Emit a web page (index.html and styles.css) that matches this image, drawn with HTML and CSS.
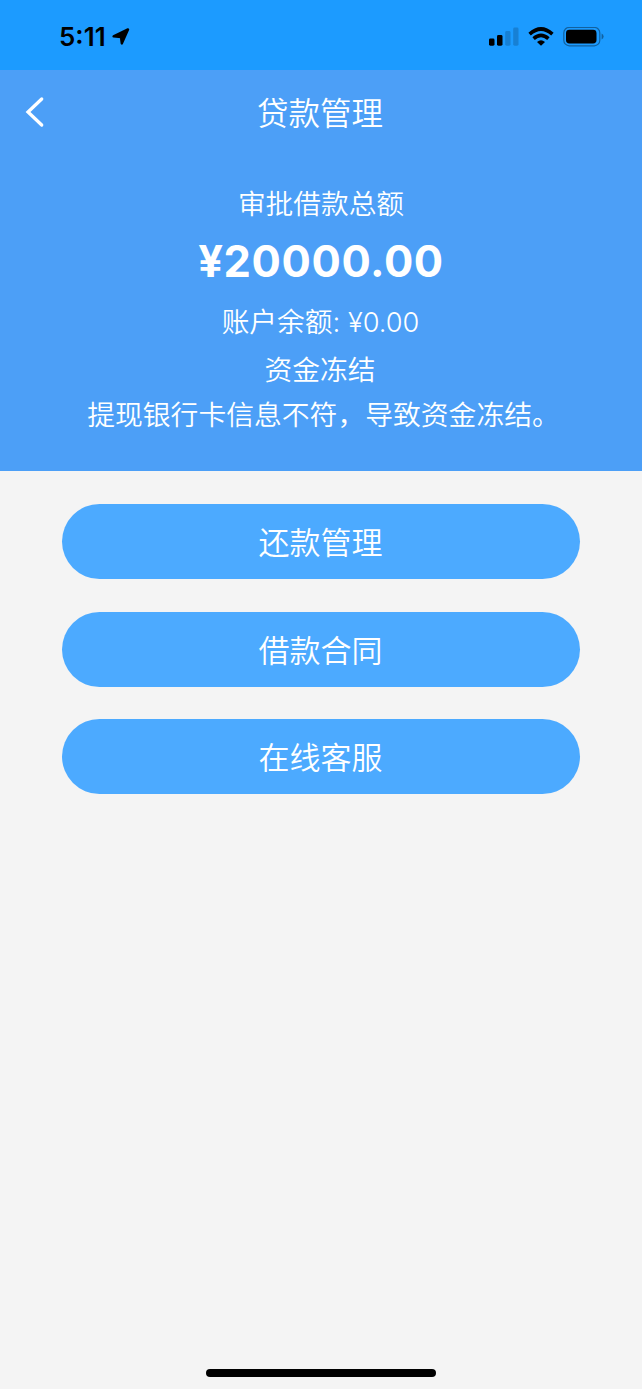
FILE: index.html
```html
<!DOCTYPE html>
<html lang="zh-CN">
<head>
    <meta charset="UTF-8">
    <meta name="viewport" content="width=device-width, initial-scale=1.0">
    <title>贷款管理</title>
    <link rel="stylesheet" href="styles.css">
</head>
<body>
    <div class="status-bar">
        <div class="status-left">
            <span class="time">5:11</span>
            <svg class="location" width="18" height="18" viewBox="0 0 18 18">
                <path d="M16 1.4 L9.8 15.4 L9 9 L1.6 8.4 Z" fill="#000" stroke="#000" stroke-width="2.4" stroke-linejoin="round"/>
            </svg>
        </div>
        <div class="status-right">
            <svg width="30" height="20" viewBox="0 0 30 20">
                <rect x="0" y="11.5" width="5.5" height="7.2" rx="1.4"/>
                <rect x="8" y="8" width="5.5" height="10.7" rx="1.4"/>
                <rect x="16.2" y="4" width="5.3" height="14.7" rx="1.4" fill="#1780d4"/>
                <rect x="24.2" y="0.5" width="5.3" height="18.2" rx="1.4" fill="#1780d4"/>
            </svg>
            <svg class="wifi" width="26" height="20" viewBox="0 0 26 20" fill="none" stroke="#000" stroke-width="3.6">
                <path d="M1.6 7.2 Q13 -3.2 24.4 7.2"/>
                <path d="M5.6 11.7 Q13 5.2 20.4 11.7"/>
                <path d="M13 18.8 L9 15 Q13 11.7 17 15 Z" fill="#000" stroke="none"/>
            </svg>
            <svg class="battery" width="41" height="20" viewBox="0 0 41 20">
                <rect x="0.8" y="0.4" width="36" height="18.4" rx="5.5" fill="none" stroke="#12619f" stroke-width="1.2"/>
                <rect x="3" y="2.8" width="30.5" height="13.6" rx="3.4"/>
                <path d="M38.6 6.6 Q40.6 7.4 40.6 9.6 T38.6 12.6 Z" fill="#12619f"/>
            </svg>
        </div>
    </div>

    <div class="header">
        <div class="nav">
            <svg class="back" width="20" height="32" viewBox="0 0 20 32">
                <path d="M16.7 3 L3 16 L16.7 29" fill="none" stroke="#fff" stroke-width="3.3" stroke-linecap="round"/>
            </svg>
            <h1>贷款管理</h1>
        </div>
        <div class="summary">
            <p class="label">审批借款总额</p>
            <p class="amount">¥20000.00</p>
            <p class="balance">账户余额: <span>¥0.00</span></p>
            <p class="status">资金冻结</p>
            <p class="reason">提现银行卡信息不符，导致资金冻结。</p>
        </div>
    </div>

    <div class="menu">
        <a class="menu-button" href="#">还款管理</a>
        <a class="menu-button" href="#">借款合同</a>
        <a class="menu-button" href="#">在线客服</a>
    </div>

    <div class="home-indicator"></div>
</body>
</html>
```

FILE: styles.css
```css
* {
    box-sizing: border-box;
}

body {
    font-family: Inter, "Noto Sans CJK SC", sans-serif;
    background-color: #f4f4f4;
    display: flex;
    flex-direction: column;
    height: 1389px;
    margin: 0;
}

.status-bar {
    display: flex;
    justify-content: space-between;
    height: 70px;
    padding: 0 38px 0 59px;
    background-color: #1c9bff;
}

.status-left {
    display: flex;
    align-items: flex-start;
    padding-top: 22px;
}

.time {
    width: 53px;
    font-size: 26px;
    font-weight: 600;
    line-height: 30px;
}

.location {
    margin-top: 6px;
}

.status-right {
    display: flex;
    align-items: flex-start;
    padding-top: 27px;
}

.wifi {
    margin-left: 9px;
}

.battery {
    margin-left: 9px;
}

.header {
    height: 401px;
    background-color: #4c9ff7;
    color: #ffffff;
}

.nav {
    display: grid;
    grid-template-columns: 50px 1fr 50px;
    align-items: center;
    height: 84px;
}

.back {
    margin-left: 25px;
}

h1 {
    margin: 0;
    padding: 0 2px 2px 0;
    font-size: 31.5px;
    font-weight: 350;
    text-align: center;
}

.summary {
    padding-top: 29px;
    text-align: center;
}

.summary p {
    margin: 0;
    font-size: 27.7px;
    font-weight: 350;
    line-height: 42px;
}

.summary .amount {
    margin: 8px 0 12px;
    font-size: 43.5px;
    font-weight: 650;
    line-height: 56px;
    letter-spacing: 0.6px;
}

.summary .balance {
    padding-right: 1px;
}

.balance span {
    font-size: 27.2px;
}

.summary .status {
    margin-top: 5px;
    padding-right: 2px;
}

.summary .reason {
    margin-top: 3px;
    padding-left: 5px;
    font-size: 27.8px;
}

.menu {
    display: flex;
    flex-direction: column;
    gap: 32.5px;
    padding: 33px 62px 0;
}

.menu-button {
    height: 75px;
    padding-right: 1px;
    border-radius: 38px;
    background-color: #4caaff;
    color: #ffffff;
    font-size: 31px;
    font-weight: 350;
    line-height: 77px;
    text-align: center;
    text-decoration: none;
}

.home-indicator {
    width: 230px;
    height: 8px;
    margin: auto auto 12px;
    border-radius: 4px;
    background-color: #000000;
}
```
